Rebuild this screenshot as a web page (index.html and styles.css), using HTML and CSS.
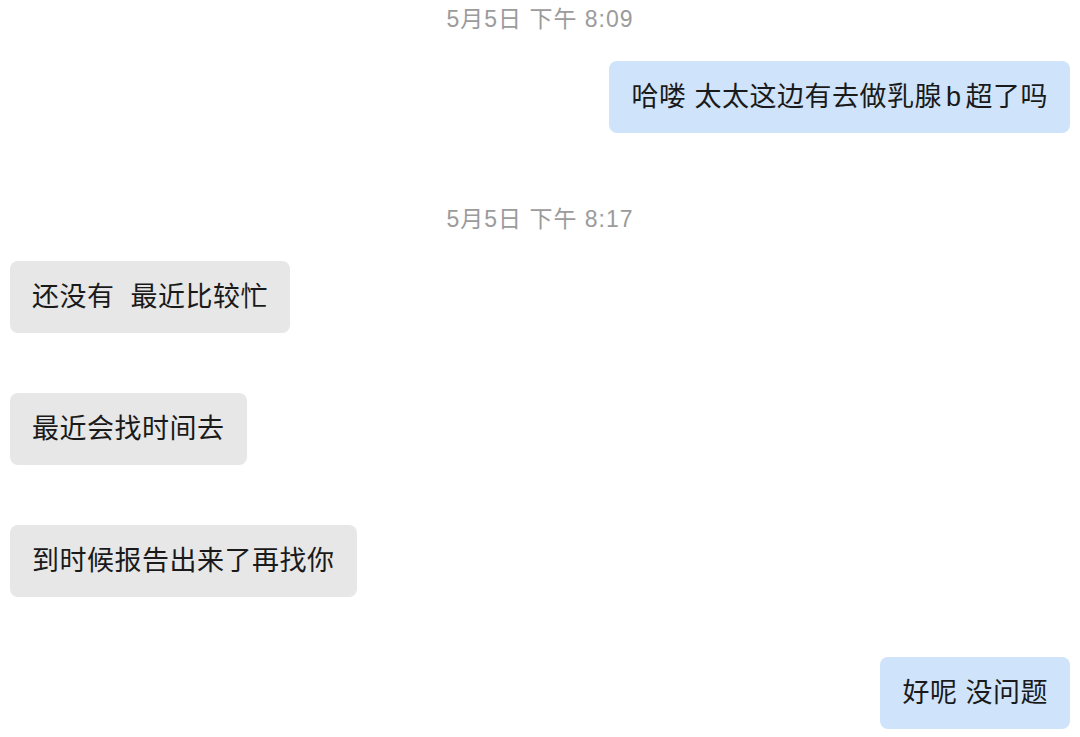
FILE: index.html
```html
<!DOCTYPE html>
<html lang="zh-CN">
<head>
  <meta charset="UTF-8">
  <meta name="viewport" content="width=device-width, initial-scale=1.0">
  <title>Chat</title>
  <link rel="stylesheet" href="styles.css">
</head>
<body>
  <div class="chat">
    <div class="time">5月5日 下午 8:09</div>
    <div class="msg msg-out">
      <div class="bubble">哈喽 太太这边有去做乳腺<span class="latin">b</span>超了吗</div>
    </div>

    <div class="time">5月5日 下午 8:17</div>
    <div class="msg msg-in">
      <div class="bubble">还没有&nbsp; 最近比较忙</div>
    </div>
    <div class="msg msg-in">
      <div class="bubble">最近会找时间去</div>
    </div>
    <div class="msg msg-in">
      <div class="bubble">到时候报告出来了再找你</div>
    </div>
    <div class="msg msg-out">
      <div class="bubble">好呢 没问题</div>
    </div>
  </div>
</body>
</html>
```

FILE: styles.css
```css
* {
  box-sizing: border-box;
}

body {
  margin: 0;
  background-color: #ffffff;
  font-family: "Liberation Sans", "Noto Sans CJK SC", sans-serif;
  color: #1a1a1a;
}

.chat {
  display: flex;
  flex-direction: column;
  padding: 4px 10px 0;
}

.time {
  margin: 11px 0 27px;
  line-height: 30px;
  font-size: 23px;
  letter-spacing: 1px;
  color: #9b9b9b;
  text-align: center;
}

.time:first-child {
  margin-top: 0;
}

.msg {
  display: flex;
  margin-bottom: 60px;
}

.msg:last-child {
  margin-bottom: 0;
}

.msg-out {
  justify-content: flex-end;
}

.msg-in {
  justify-content: flex-start;
}

.bubble {
  height: 72px;
  padding: 17px 22px;
  line-height: 38px;
  font-size: 27px;
  letter-spacing: 0.5px;
  border-radius: 8px;
  white-space: nowrap;
}

/* mixed latin letter gets a bit of air, like the native renderer */
.latin {
  padding: 0 4px;
}

.msg-out .bubble {
  background-color: #cfe4fb;
}

.msg-in .bubble {
  background-color: #e7e7e7;
}
```
